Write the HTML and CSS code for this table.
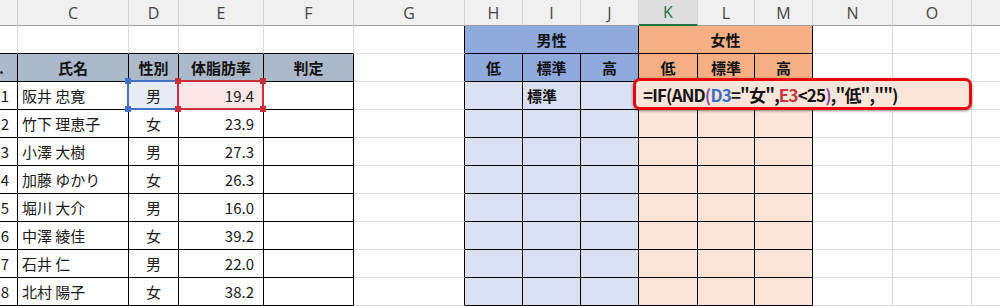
FILE: index.html
```html
<!DOCTYPE html>
<html lang="ja">
<head>
<meta charset="utf-8">
<title>体脂肪率 判定</title>
<link rel="stylesheet" href="styles.css">
</head>
<body>
<div class="sheet">
  <!-- column headers -->
  <div class="cell hd"></div>
  <div class="cell hd">C</div>
  <div class="cell hd">D</div>
  <div class="cell hd">E</div>
  <div class="cell hd">F</div>
  <div class="cell hd">G</div>
  <div class="cell hd">H</div>
  <div class="cell hd">I</div>
  <div class="cell hd">J</div>
  <div class="cell hd active">K</div>
  <div class="cell hd">L</div>
  <div class="cell hd">M</div>
  <div class="cell hd">N</div>
  <div class="cell hd">O</div>
  <div class="cell hd"></div>

  <!-- row 1 -->
  <div class="cell bb"></div>
  <div class="cell bb"></div>
  <div class="cell bb"></div>
  <div class="cell bb"></div>
  <div class="cell bb"></div>
  <div class="cell br"></div>
  <div class="cell tb male b ctr span3">男性</div>
  <div class="cell tb female b ctr span3">女性</div>
  <div class="cell"></div>
  <div class="cell"></div>
  <div class="cell"></div>

  <!-- row 2 -->
  <div class="cell tb th b end clipL"><span>No.</span></div>
  <div class="cell tb th b ctr">氏名</div>
  <div class="cell tb th b ctr">性別</div>
  <div class="cell tb th b ctr">体脂肪率</div>
  <div class="cell tb th b ctr">判定</div>
  <div class="cell br"></div>
  <div class="cell tb male b ctr">低</div>
  <div class="cell tb male b ctr">標準</div>
  <div class="cell tb male b ctr">高</div>
  <div class="cell tb female b ctr">低</div>
  <div class="cell tb female b ctr">標準</div>
  <div class="cell tb female b ctr">高</div>
  <div class="cell"></div>
  <div class="cell"></div>
  <div class="cell"></div>

  <!-- row 3 -->
  <div class="cell tb no">1</div>
  <div class="cell tb">阪井 忠寛</div>
  <div class="cell tb ctr ref-blue">男<span class="frame"></span></div>
  <div class="cell tb num ref-red">19.4<span class="frame"></span></div>
  <div class="cell tb"></div>
  <div class="cell br"></div>
  <div class="cell tb male-l"></div>
  <div class="cell tb male-l b">標準</div>
  <div class="cell tb male-l"></div>
  <div class="cell tb female-l editing">
    <div class="formula">=IF<span class="p">(</span>AND<span class="p2">(</span><span class="rb">D3</span>="女",<span class="rr">E3</span>&lt;25<span class="p2">)</span>,"低",""<span class="p">)</span></div>
  </div>
  <div class="cell tb female-l"></div>
  <div class="cell tb female-l"></div>
  <div class="cell"></div>
  <div class="cell"></div>
  <div class="cell"></div>

  <!-- row 4 -->
  <div class="cell tb no">2</div>
  <div class="cell tb">竹下 理恵子</div>
  <div class="cell tb ctr">女</div>
  <div class="cell tb num">23.9</div>
  <div class="cell tb"></div>
  <div class="cell br"></div>
  <div class="cell tb male-l"></div>
  <div class="cell tb male-l"></div>
  <div class="cell tb male-l"></div>
  <div class="cell tb female-l"></div>
  <div class="cell tb female-l"></div>
  <div class="cell tb female-l"></div>
  <div class="cell"></div>
  <div class="cell"></div>
  <div class="cell"></div>

  <!-- row 5 -->
  <div class="cell tb no">3</div>
  <div class="cell tb">小澤 大樹</div>
  <div class="cell tb ctr">男</div>
  <div class="cell tb num">27.3</div>
  <div class="cell tb"></div>
  <div class="cell br"></div>
  <div class="cell tb male-l"></div>
  <div class="cell tb male-l"></div>
  <div class="cell tb male-l"></div>
  <div class="cell tb female-l"></div>
  <div class="cell tb female-l"></div>
  <div class="cell tb female-l"></div>
  <div class="cell"></div>
  <div class="cell"></div>
  <div class="cell"></div>

  <!-- row 6 -->
  <div class="cell tb no">4</div>
  <div class="cell tb">加藤 ゆかり</div>
  <div class="cell tb ctr">女</div>
  <div class="cell tb num">26.3</div>
  <div class="cell tb"></div>
  <div class="cell br"></div>
  <div class="cell tb male-l"></div>
  <div class="cell tb male-l"></div>
  <div class="cell tb male-l"></div>
  <div class="cell tb female-l"></div>
  <div class="cell tb female-l"></div>
  <div class="cell tb female-l"></div>
  <div class="cell"></div>
  <div class="cell"></div>
  <div class="cell"></div>

  <!-- row 7 -->
  <div class="cell tb no">5</div>
  <div class="cell tb">堀川 大介</div>
  <div class="cell tb ctr">男</div>
  <div class="cell tb num">16.0</div>
  <div class="cell tb"></div>
  <div class="cell br"></div>
  <div class="cell tb male-l"></div>
  <div class="cell tb male-l"></div>
  <div class="cell tb male-l"></div>
  <div class="cell tb female-l"></div>
  <div class="cell tb female-l"></div>
  <div class="cell tb female-l"></div>
  <div class="cell"></div>
  <div class="cell"></div>
  <div class="cell"></div>

  <!-- row 8 -->
  <div class="cell tb no">6</div>
  <div class="cell tb">中澤 綾佳</div>
  <div class="cell tb ctr">女</div>
  <div class="cell tb num">39.2</div>
  <div class="cell tb"></div>
  <div class="cell br"></div>
  <div class="cell tb male-l"></div>
  <div class="cell tb male-l"></div>
  <div class="cell tb male-l"></div>
  <div class="cell tb female-l"></div>
  <div class="cell tb female-l"></div>
  <div class="cell tb female-l"></div>
  <div class="cell"></div>
  <div class="cell"></div>
  <div class="cell"></div>

  <!-- row 9 -->
  <div class="cell tb no">7</div>
  <div class="cell tb">石井 仁</div>
  <div class="cell tb ctr">男</div>
  <div class="cell tb num">22.0</div>
  <div class="cell tb"></div>
  <div class="cell br"></div>
  <div class="cell tb male-l"></div>
  <div class="cell tb male-l"></div>
  <div class="cell tb male-l"></div>
  <div class="cell tb female-l"></div>
  <div class="cell tb female-l"></div>
  <div class="cell tb female-l"></div>
  <div class="cell"></div>
  <div class="cell"></div>
  <div class="cell"></div>

  <!-- row 10 -->
  <div class="cell tb no">8</div>
  <div class="cell tb">北村 陽子</div>
  <div class="cell tb ctr">女</div>
  <div class="cell tb num">38.2</div>
  <div class="cell tb"></div>
  <div class="cell br"></div>
  <div class="cell tb male-l"></div>
  <div class="cell tb male-l"></div>
  <div class="cell tb male-l"></div>
  <div class="cell tb female-l"></div>
  <div class="cell tb female-l"></div>
  <div class="cell tb female-l"></div>
  <div class="cell"></div>
  <div class="cell"></div>
  <div class="cell"></div>
</div>
</body>
</html>
```

FILE: styles.css
```css
html, body {
  margin: 0;
  padding: 0;
  background: #ffffff;
  overflow: hidden;
}

body {
  font-family: "Noto Sans CJK JP", sans-serif;
  color: #1a1a1a;
  font-size: 15px;
}

.sheet {
  display: grid;
  grid-template-columns: 18px 111px 50px 85px 90px 111px 58px 58px 58px 59px 57px 58px 80px 79px 60px;
  grid-template-rows: 26px repeat(10, 28px);
  width: 1032px;
}

.cell {
  box-sizing: border-box;
  display: flex;
  align-items: center;
  padding: 0 4px;
  border-right: 1px solid #dcdcdc;
  border-bottom: 1px solid #dcdcdc;
  overflow: hidden;
  white-space: nowrap;
  line-height: 1;
}

/* column headers */
.hd {
  justify-content: center;
  background: #f0f0f0;
  color: #454545;
  font-family: "Open Sans", "Liberation Sans", sans-serif;
  font-size: 16px;
  border-right-color: #d2d2d2;
  border-bottom-color: #9f9f9f;
}

.hd.active {
  background: #dedede;
  color: #1e7145;
  border-bottom: 2px solid #217346;
}

/* borders */
.bb { border-bottom-color: #000; }
.br { border-right-color: #000; }
.tb {
  border-right-color: #000;
  border-bottom-color: #000;
}

.b { font-weight: 700; color: #111; }
.ctr { justify-content: center; }
.end { justify-content: flex-end; }
.num { justify-content: flex-end; padding-right: 9px; }
.no { justify-content: flex-end; padding-right: 8px; }
.clipL { padding-right: 13px; }
.span3 { grid-column: span 3; }

/* fills */
.th { background: #acb9ca; }
.male { background: #8ea9db; }
.female { background: #f4b084; }
.male-l { background: #d9e1f2; }
.female-l { background: #fce4d6; }

/* selected reference cells */
.ref-blue,
.ref-red {
  position: relative;
  overflow: visible;
}

.ref-blue { background: #e6edf8; }
.ref-red { background: #fbe7e8; }

.frame {
  position: absolute;
  left: -2px;
  top: -2px;
  right: -1px;
  bottom: -1px;
  border: 2px solid #4472c4;
}

.ref-red .frame { border-color: #c9303c; }

.frame::after {
  content: "";
  position: absolute;
  left: -4px;
  top: -4px;
  right: -4px;
  bottom: -4px;
  background:
    linear-gradient(#4472c4, #4472c4) 0 0 / 6px 6px no-repeat,
    linear-gradient(#4472c4, #4472c4) 100% 0 / 6px 6px no-repeat,
    linear-gradient(#4472c4, #4472c4) 0 100% / 6px 6px no-repeat,
    linear-gradient(#4472c4, #4472c4) 100% 100% / 6px 6px no-repeat;
}

.ref-red .frame::after {
  background:
    linear-gradient(#c9303c, #c9303c) 0 0 / 6px 6px no-repeat,
    linear-gradient(#c9303c, #c9303c) 100% 0 / 6px 6px no-repeat,
    linear-gradient(#c9303c, #c9303c) 0 100% / 6px 6px no-repeat,
    linear-gradient(#c9303c, #c9303c) 100% 100% / 6px 6px no-repeat;
}

/* cell in edit mode with formula callout */
.editing {
  position: relative;
  overflow: visible;
}

.formula {
  position: absolute;
  z-index: 2;
  left: -6px;
  top: -4px;
  width: 339px;
  height: 32px;
  box-sizing: border-box;
  border: 3px solid #e8000f;
  border-radius: 7px;
  background: #fce6da;
  box-shadow: 0 1px 3px rgba(0, 0, 0, 0.45);
  display: flex;
  align-items: center;
  padding-left: 7px;
  font-size: 17px;
  letter-spacing: -0.85px;
  font-weight: 700;
  color: #141414;
  white-space: nowrap;
}

.formula .rb { color: #3a6fc8; }
.formula .rr { color: #d0303e; }
.formula .p2 { color: #8a4fa8; }
```
